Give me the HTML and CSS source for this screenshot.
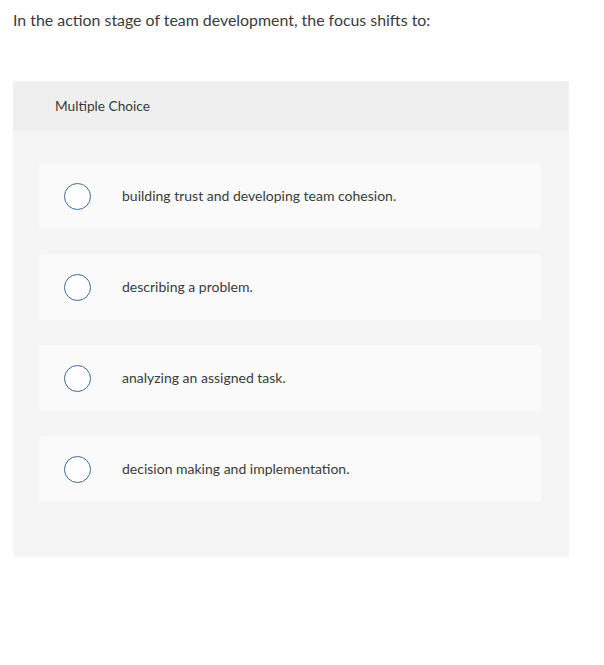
FILE: index.html
```html
<!DOCTYPE html>
<html>
<head>
<meta charset="utf-8">
<link rel="stylesheet" href="styles.css">
</head>
<body>
<div class="page">
  <p class="question">In the action stage of team development, the focus shifts to:</p>
  <div class="card">
    <div class="card-header">Multiple Choice</div>
    <div class="options">
      <div class="option"><span class="radio"></span><span class="label">building trust and developing team cohesion.</span></div>
      <div class="option"><span class="radio"></span><span class="label">describing a problem.</span></div>
      <div class="option"><span class="radio"></span><span class="label">analyzing an assigned task.</span></div>
      <div class="option"><span class="radio"></span><span class="label">decision making and implementation.</span></div>
    </div>
  </div>
</div>
</body>
</html>
```
FILE: styles.css
```css
html, body {
  margin: 0;
  padding: 0;
  background: #ffffff;
}
body {
  font-family: "Lato", "Liberation Sans", sans-serif;
  color: #333333;
}
.page {
  padding: 10px 35px 0 13px;
}
.question {
  margin: 0;
  font-size: 15.9px;
  line-height: 20px;
  color: #3a3a3a;
}
.card {
  margin-top: 51px;
  width: 556px;
  background: #f5f5f5;
  border-radius: 3px;
  overflow: hidden;
}
.card-header {
  height: 50px;
  box-sizing: border-box;
  background: #efefef;
  display: flex;
  align-items: center;
  padding: 0 0 2px 42px;
  font-size: 13.7px;
  color: #3a3a3a;
}
.options {
  display: flex;
  flex-direction: column;
  gap: 25px;
  padding: 32px 28px 55px 26px;
}
.option {
  height: 66px;
  background: #fafafa;
  border-radius: 4px;
  display: flex;
  align-items: center;
  padding-left: 25px;
}
.radio {
  width: 25px;
  height: 25px;
  border: 1.5px solid #3e6791;
  border-radius: 50%;
  background: #ffffff;
  flex: none;
}
.label {
  margin-left: 31px;
  padding-bottom: 2px;
  font-size: 14px;
  color: #3a3a3a;
}
```
